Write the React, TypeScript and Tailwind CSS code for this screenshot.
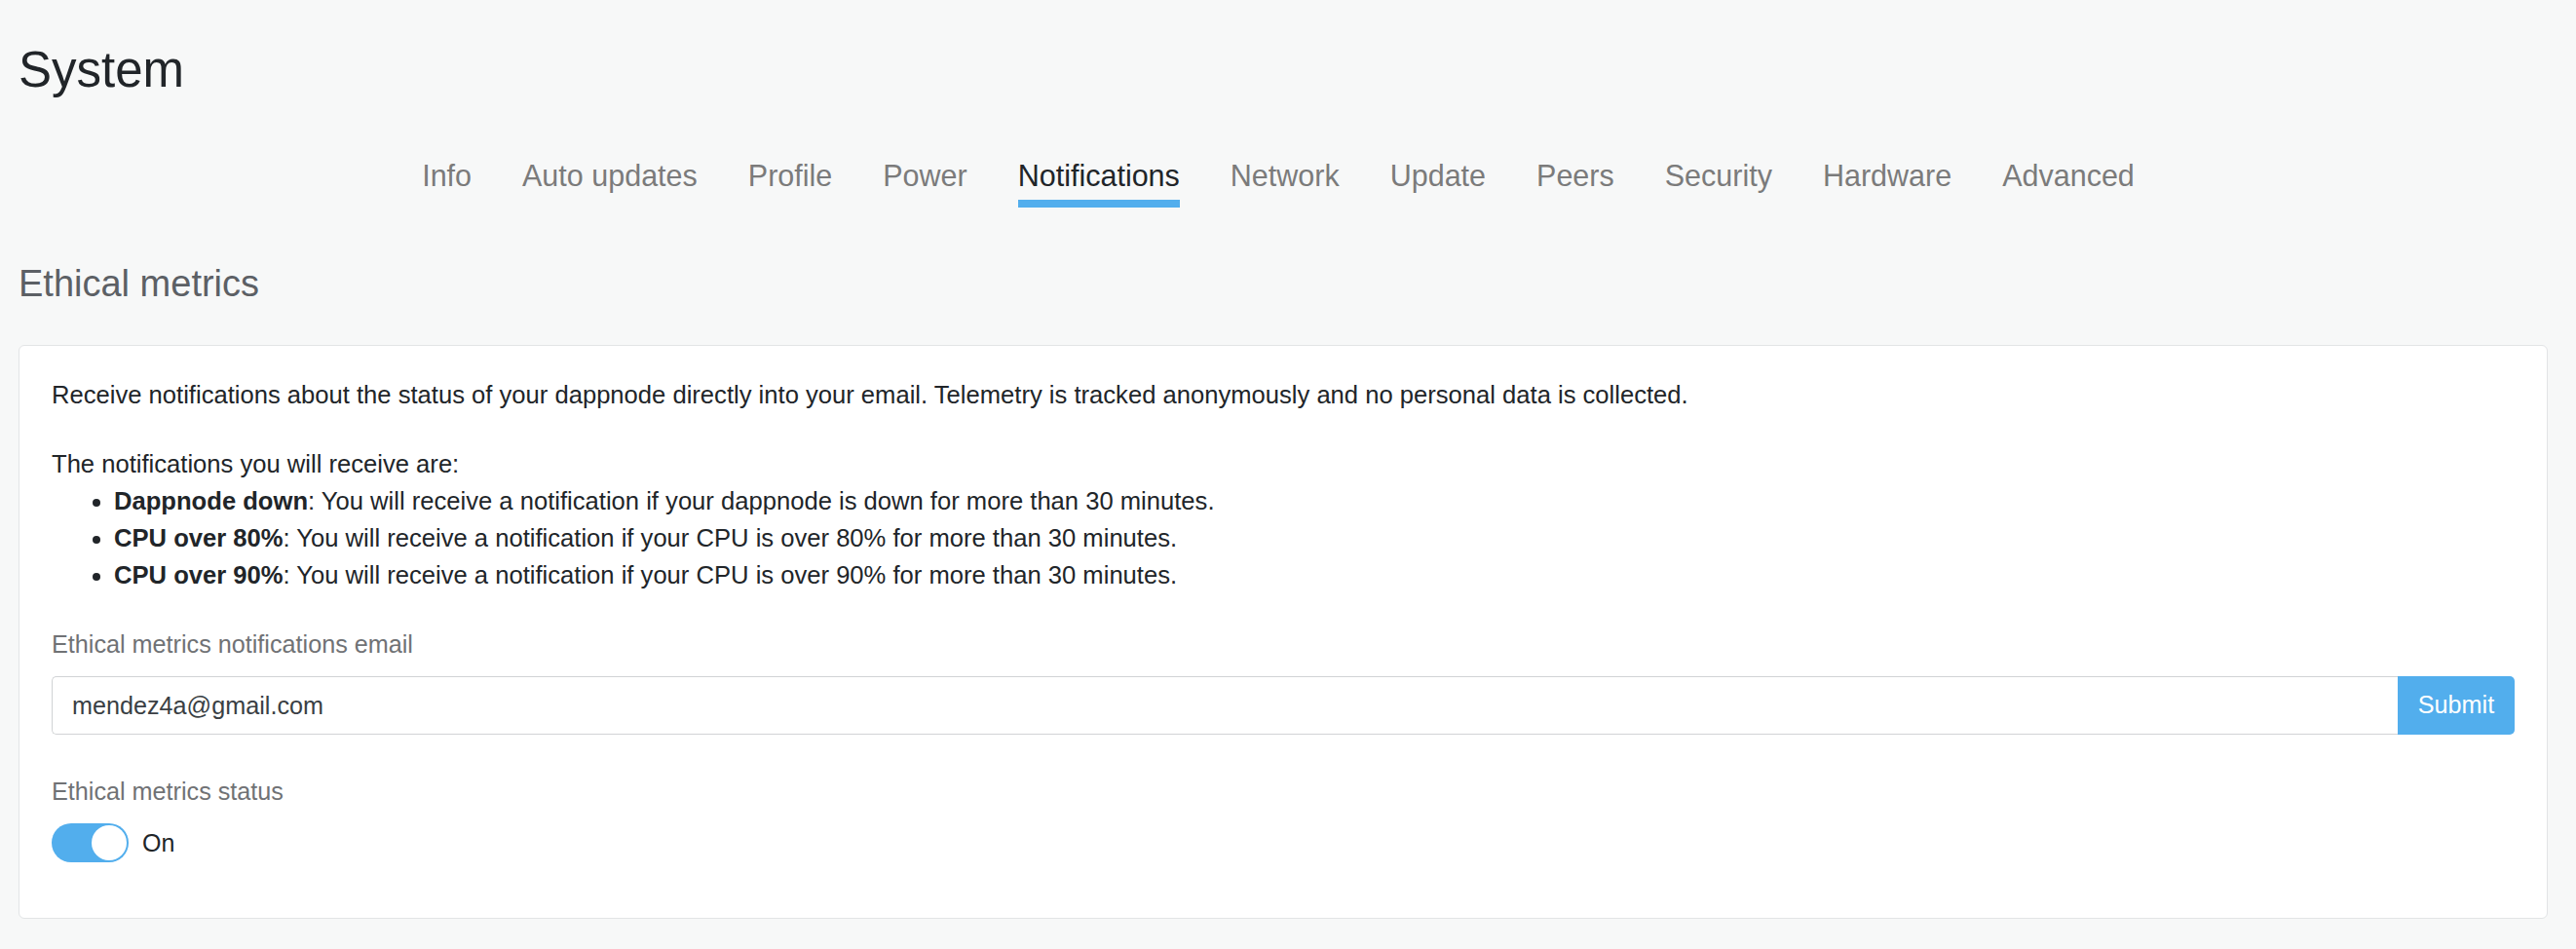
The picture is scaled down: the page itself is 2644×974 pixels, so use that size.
import { useState } from "react";

const tabs = [
    "Info",
    "Auto updates",
    "Profile",
    "Power",
    "Notifications",
    "Network",
    "Update",
    "Peers",
    "Security",
    "Hardware",
    "Advanced",
];

const Tabs = ({ active }: { active: string }) => {
    return (
        <nav className="mt-[59px] mr-[10px] flex justify-center gap-[52px]">
            {tabs.map((t) => (
                <div key={t} className="flex flex-col">
                    <span
                        className={
                            t === active
                                ? "text-[30.5px] leading-[36px] text-[#212529]"
                                : "text-[30.5px] leading-[36px] text-[#7b7b7b]"
                        }
                    >
                        {t}
                    </span>
                    <div
                        className={
                            t === active
                                ? "mt-[7px] h-[8px] bg-[#52aeed]"
                                : "mt-[7px] h-[8px]"
                        }
                    />
                </div>
            ))}
        </nav>
    );
};

const Toggle = () => {
    const [on, setOn] = useState(true);

    return (
        <div className="mt-[14px] flex items-center gap-[14px]">
            <button
                className="flex h-[40px] w-[79px] items-center justify-end rounded-full bg-[#52aeed] p-[2px]"
                onClick={() => setOn(!on)}
            >
                <span className="h-[36px] w-[36px] rounded-full bg-white" />
            </button>
            <span className="text-[25px] leading-[38px] text-[#212529]">
                {on ? "On" : "Off"}
            </span>
        </div>
    );
};

const items = [
    {
        title: "Dappnode down",
        text: ": You will receive a notification if your dappnode is down for more than 30 minutes.",
    },
    {
        title: "CPU over 80%",
        text: ": You will receive a notification if your CPU is over 80% for more than 30 minutes.",
    },
    {
        title: "CPU over 90%",
        text: ": You will receive a notification if your CPU is over 90% for more than 30 minutes.",
    },
];

const EthicalMetrics = () => {
    const [email, setEmail] = useState("mendez4a@gmail.com");

    return (
        <div className="mt-[40px] rounded-[6px] border border-[#e2e4e6] bg-white px-[33px] pt-[31px] pb-[57px]">
            <p className="text-[25.6px] leading-[38px] text-[#212529]">
                Receive notifications about the status of your dappnode directly into your email. Telemetry is tracked anonymously and no personal data is collected.
            </p>
            <p className="mt-[33px] text-[25.6px] leading-[38px] text-[#212529]">
                The notifications you will receive are:
            </p>
            <ul className="list-disc pl-[64px] text-[25.6px] leading-[38px] text-[#212529]">
                {items.map((i) => (
                    <li key={i.title}>
                        <b className="font-bold">{i.title}</b>
                        {i.text}
                    </li>
                ))}
            </ul>

            <div className="mt-[33px] text-[25.2px] leading-[38px] text-[#707275]">
                Ethical metrics notifications email
            </div>
            <div className="mt-[14px] flex h-[60px]">
                <input
                    className="h-full flex-1 rounded-l-[5px] border border-r-0 border-[#d1d3d5] px-[20px] text-[25.2px] text-[#3a3f44] outline-none"
                    value={email}
                    onChange={(e) => setEmail(e.target.value)}
                />
                <button className="h-full w-[120px] rounded-r-[5px] bg-[#52aeed] text-[25.2px] text-white">
                    Submit
                </button>
            </div>

            <div className="mt-[39px] text-[25.2px] leading-[38px] text-[#707275]">
                Ethical metrics status
            </div>
            <Toggle />
        </div>
    );
};

const App = () => {
    return (
        <div className="min-h-screen bg-[#f7f8f8] pt-[41px] pl-[19px] pr-[29px] font-['Liberation_Sans',Arial,sans-serif]">
            <h1 className="text-[51px] leading-[62px] font-normal text-[#212529]">System</h1>
            <Tabs active="Notifications" />
            <h2 className="mt-[55px] text-[38px] leading-[46px] text-[#5c6065]">Ethical metrics</h2>
            <EthicalMetrics />
        </div>
    );
};

export default App;
